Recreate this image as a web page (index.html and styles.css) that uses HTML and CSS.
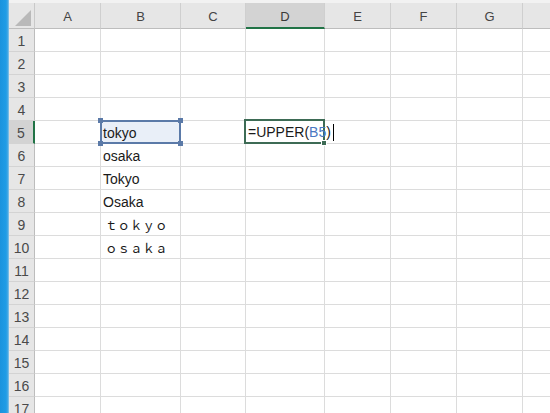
FILE: index.html
```html
<!DOCTYPE html>
<html lang="ja">
<head>
<meta charset="utf-8">
<title>Sheet</title>
<link rel="stylesheet" href="styles.css">
</head>
<body>
<div class="app">
  <div class="edge"></div>
  <div class="sheet">
    <div class="strip"></div>
    <div class="grid">
      <div class="corner"><svg width="16" height="16" viewBox="0 0 16 16"><polygon points="16,0 16,16 0,16" fill="#b9b9b9"/></svg></div>
      <div class="ch">A</div><div class="ch">B</div><div class="ch">C</div><div class="ch sel">D</div><div class="ch">E</div><div class="ch">F</div><div class="ch">G</div><div class="ch"></div>

      <div class="rh">1</div><div class="c"></div><div class="c"></div><div class="c"></div><div class="c"></div><div class="c"></div><div class="c"></div><div class="c"></div><div class="c"></div>
      <div class="rh">2</div><div class="c"></div><div class="c"></div><div class="c"></div><div class="c"></div><div class="c"></div><div class="c"></div><div class="c"></div><div class="c"></div>
      <div class="rh">3</div><div class="c"></div><div class="c"></div><div class="c"></div><div class="c"></div><div class="c"></div><div class="c"></div><div class="c"></div><div class="c"></div>
      <div class="rh">4</div><div class="c"></div><div class="c"></div><div class="c"></div><div class="c"></div><div class="c"></div><div class="c"></div><div class="c"></div><div class="c"></div>
      <div class="rh sel">5</div><div class="c"></div>
      <div class="c shape"><div class="box"><span>tokyo</span><i class="h tl"></i><i class="h tr"></i><i class="h bl"></i><i class="h br"></i></div></div>
      <div class="c"></div>
      <div class="c active"><div class="cur"><span>=UPPER(</span><span class="ref">B5</span><span>)</span><span class="caret"></span><i class="fill"></i></div></div>
      <div class="c"></div><div class="c"></div><div class="c"></div><div class="c"></div>
      <div class="rh">6</div><div class="c"></div><div class="c t">osaka</div><div class="c"></div><div class="c"></div><div class="c"></div><div class="c"></div><div class="c"></div><div class="c"></div>
      <div class="rh">7</div><div class="c"></div><div class="c t">Tokyo</div><div class="c"></div><div class="c"></div><div class="c"></div><div class="c"></div><div class="c"></div><div class="c"></div>
      <div class="rh">8</div><div class="c"></div><div class="c t">Osaka</div><div class="c"></div><div class="c"></div><div class="c"></div><div class="c"></div><div class="c"></div><div class="c"></div>
      <div class="rh">9</div><div class="c"></div><div class="c t fw">ｔｏｋｙｏ</div><div class="c"></div><div class="c"></div><div class="c"></div><div class="c"></div><div class="c"></div><div class="c"></div>
      <div class="rh">10</div><div class="c"></div><div class="c t fw">ｏｓａｋａ</div><div class="c"></div><div class="c"></div><div class="c"></div><div class="c"></div><div class="c"></div><div class="c"></div>
      <div class="rh">11</div><div class="c"></div><div class="c"></div><div class="c"></div><div class="c"></div><div class="c"></div><div class="c"></div><div class="c"></div><div class="c"></div>
      <div class="rh">12</div><div class="c"></div><div class="c"></div><div class="c"></div><div class="c"></div><div class="c"></div><div class="c"></div><div class="c"></div><div class="c"></div>
      <div class="rh">13</div><div class="c"></div><div class="c"></div><div class="c"></div><div class="c"></div><div class="c"></div><div class="c"></div><div class="c"></div><div class="c"></div>
      <div class="rh">14</div><div class="c"></div><div class="c"></div><div class="c"></div><div class="c"></div><div class="c"></div><div class="c"></div><div class="c"></div><div class="c"></div>
      <div class="rh">15</div><div class="c"></div><div class="c"></div><div class="c"></div><div class="c"></div><div class="c"></div><div class="c"></div><div class="c"></div><div class="c"></div>
      <div class="rh">16</div><div class="c"></div><div class="c"></div><div class="c"></div><div class="c"></div><div class="c"></div><div class="c"></div><div class="c"></div><div class="c"></div>
      <div class="rh">17</div><div class="c"></div><div class="c"></div><div class="c"></div><div class="c"></div><div class="c"></div><div class="c"></div><div class="c"></div><div class="c"></div>
    </div>
  </div>
</div>
</body>
</html>
```

FILE: styles.css
```css
* { box-sizing: border-box; }
html, body { margin: 0; padding: 0; background: #fff; }
body { width: 550px; height: 413px; overflow: hidden; font-family: "Liberation Sans", "Noto Sans CJK JP", sans-serif; }
.app { display: flex; height: 413px; overflow: hidden; }
.edge { width: 9px; flex: none; background: linear-gradient(to right, #1b93dd 0, #1f9ce6 6px, #4aa9e2 8px, #9fcdea 9px); }
.sheet { flex: 1; display: flex; flex-direction: column; min-width: 0; }
.strip { height: 3px; flex: none; background: #f2f2f2; }
.grid {
  flex: none;
  display: grid;
  grid-template-columns: 26px 66px 80px 65px 79px 66px 66px 66px 40px;
  grid-template-rows: 26px repeat(17, 23px);
}
.corner { background: #e6e6e6; border-right: 1px solid #c9c9c9; border-bottom: 1px solid #bdbdbd; display: flex; align-items: flex-end; justify-content: flex-end; padding: 0 3px 2px 0; }
.ch { background: #e6e6e6; border-right: 1px solid #cfcfcf; border-bottom: 1px solid #bdbdbd; display: flex; align-items: center; justify-content: center; font-size: 13px; color: #444; padding-top: 1px; }
.ch.sel { background: #d3d3d3; border-bottom: 2px solid #217346; color: #3a3a3a; padding-top: 2px; }
.rh { background: #e6e6e6; border-right: 1px solid #bdbdbd; border-bottom: 1px solid #d3d3d3; display: flex; align-items: center; justify-content: center; font-size: 14px; color: #4a4a4a; padding-top: 1px; }
.rh.sel { background: #d3d3d3; border-right: 2px solid #217346; }
.c { border-right: 1px solid #dcdcdc; border-bottom: 1px solid #dcdcdc; position: relative; }
.t { font-size: 14px; color: #1a1a1a; display: flex; align-items: center; padding-left: 2px; padding-top: 1px; white-space: nowrap; }
.fw { font-family: "Noto Sans CJK JP", sans-serif; font-size: 12.5px; padding-left: 4px; }
.shape { overflow: visible; }
.box { position: absolute; left: -1px; top: -1px; width: 81px; height: 24px; background: #e9eff8; border: 2px solid #5b7aa8; display: flex; align-items: center; padding-left: 1px; padding-top: 1px; font-size: 14px; color: #1a1a1a; z-index: 2; }
.h { position: absolute; width: 5px; height: 5px; background: #5b7aa8; }
.h.tl { left: -4px; top: -4px; }
.h.tr { right: -4px; top: -4px; }
.h.bl { left: -4px; bottom: -4px; }
.h.br { right: -4px; bottom: -4px; }
.active { overflow: visible; }
.cur { position: absolute; left: -2px; top: -2px; width: 81px; height: 25px; border: 2px solid #3d6b55; display: flex; align-items: center; padding-left: 2px; padding-top: 1px; font-size: 14px; color: #1a1a1a; white-space: nowrap; z-index: 3; overflow: visible; }
.cur span { flex: none; }
.ref { color: #4a78c2; }
.cur .caret { display: block; width: 1px; height: 17px; background: #000; margin-left: 2px; }
.fill { position: absolute; right: -4px; bottom: -4px; width: 6px; height: 6px; background: #3d6b55; border: 1px solid #fff; }
```
